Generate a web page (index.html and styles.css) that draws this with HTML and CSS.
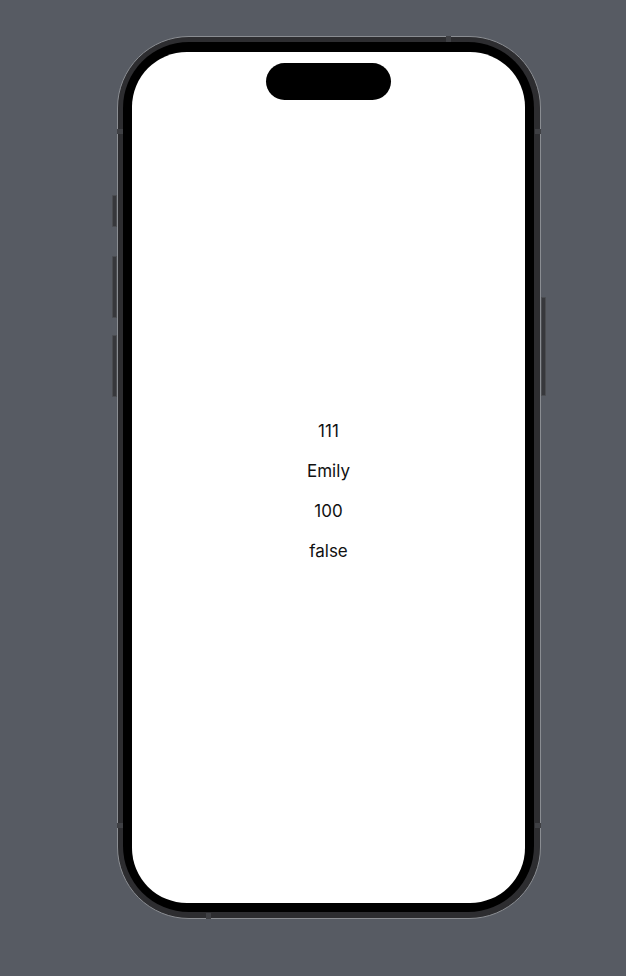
FILE: index.html
```html
<!DOCTYPE html>
<html lang="en">
<head>
<meta charset="utf-8">
<title>Preview</title>
<link rel="stylesheet" href="styles.css">
</head>
<body>
<div class="stage">
  <div class="phone">
    <div class="btn btn-action"></div>
    <div class="btn btn-vol-up"></div>
    <div class="btn btn-vol-down"></div>
    <div class="btn btn-power"></div>
    <div class="band band-top"></div>
    <div class="band band-bottom"></div>
    <div class="band band-left-top"></div>
    <div class="band band-left-bottom"></div>
    <div class="band band-right-top"></div>
    <div class="band band-right-bottom"></div>
    <div class="bezel">
      <div class="screen">
        <div class="island"></div>
        <div class="content">
          <div class="line">111</div>
          <div class="line">Emily</div>
          <div class="line">100</div>
          <div class="line">false</div>
        </div>
      </div>
    </div>
  </div>
</div>
</body>
</html>
```

FILE: styles.css
```css
html, body {
  margin: 0;
  padding: 0;
  background: #575b63;
  width: 626px;
  height: 976px;
  overflow: hidden;
}

.stage {
  padding: 36px 0 0 117px;
}

.phone {
  position: relative;
  box-sizing: border-box;
  width: 424px;
  height: 883px;
  border: 1px solid #8a8d92;
  border-radius: 72px;
  background: #2d2d30;
  padding: 5px 6px 6px 5px;
}

.bezel {
  box-sizing: border-box;
  height: 100%;
  background: #000;
  border-radius: 66px;
  padding: 10px 9px 9px 9px;
}

.screen {
  position: relative;
  box-sizing: border-box;
  height: 100%;
  background: #fff;
  border-radius: 55px;
  padding: 61px 0 34px 0;
  display: flex;
  flex-direction: column;
  justify-content: center;
  align-items: center;
}

.island {
  position: absolute;
  top: 11px;
  left: 134px;
  width: 125px;
  height: 37px;
  border-radius: 19px;
  background: #000;
}

.content {
  display: flex;
  flex-direction: column;
  align-items: center;
  gap: 18.3px;
  font-family: Inter, "Noto Sans", sans-serif;
  font-size: 17px;
  line-height: 22px;
  color: #111;
}

.btn {
  position: absolute;
  background: #37383c;
  border: 1px solid #4a4c50;
  box-sizing: border-box;
}
.btn-action { left: -6px; top: 158px; width: 5px; height: 32px; border-radius: 1px 0 0 1px; }
.btn-vol-up { left: -6px; top: 219px; width: 5px; height: 62px; border-radius: 1px 0 0 1px; }
.btn-vol-down { left: -6px; top: 298px; width: 5px; height: 62px; border-radius: 1px 0 0 1px; }
.btn-power { left: 423px; top: 260px; width: 5px; height: 99px; border-radius: 0 1px 1px 0; }

.band {
  position: absolute;
  background: #3f4044;
}
.band-top { top: -1px; left: 328px; width: 5px; height: 6px; }
.band-bottom { bottom: -1px; left: 88px; width: 5px; height: 6px; }
.band-left-top { left: -1px; top: 92px; width: 6px; height: 5px; }
.band-left-bottom { left: -1px; top: 786px; width: 6px; height: 5px; }
.band-right-top { right: -1px; top: 92px; width: 6px; height: 5px; }
.band-right-bottom { right: -1px; top: 786px; width: 6px; height: 5px; }
```
